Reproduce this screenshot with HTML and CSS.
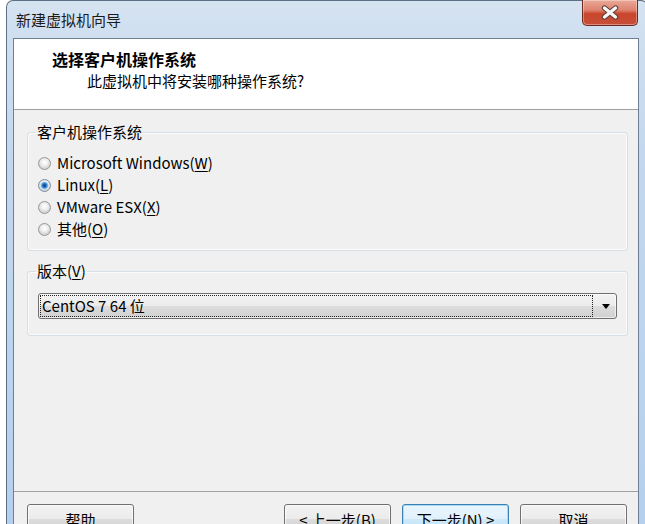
FILE: index.html
```html
<!DOCTYPE html>
<html lang="zh-CN">
<head>
<meta charset="utf-8">
<title>新建虚拟机向导</title>
<link rel="stylesheet" href="styles.css">
</head>
<body>
<div class="window">
  <div class="titlebar">
    <span class="title">新建虚拟机向导</span>
    <div class="close">
      <svg width="20" height="15" viewBox="0 0 20 15">
        <path d="M4.5 3 L15.5 12 M15.5 3 L4.5 12" stroke="#5a3b34" stroke-width="5.4" stroke-linecap="round" fill="none"/>
        <path d="M4.5 3 L15.5 12 M15.5 3 L4.5 12" stroke="#f7f7f7" stroke-width="3.4" stroke-linecap="round" fill="none"/>
      </svg>
    </div>
  </div>
  <div class="client">
    <div class="header">
      <div class="h-title">选择客户机操作系统</div>
      <div class="h-sub">此虚拟机中将安装哪种操作系统?</div>
    </div>
    <div class="body">
      <fieldset class="group">
        <legend class="legend">客户机操作系统</legend>
        <div class="radios">
          <div class="radio-row"><span class="radio"></span><span>Microsoft Windows(<u>W</u>)</span></div>
          <div class="radio-row"><span class="radio checked"></span><span>Linux(<u>L</u>)</span></div>
          <div class="radio-row"><span class="radio"></span><span>VMware ESX(<u>X</u>)</span></div>
          <div class="radio-row"><span class="radio"></span><span>其他(<u>O</u>)</span></div>
        </div>
      </fieldset>
      <fieldset class="group group2">
        <legend class="legend">版本(<u>V</u>)</legend>
        <div class="select">
          <div class="sel-value">CentOS 7 64 位</div>
          <div class="sel-arrow"><span class="tri"></span></div>
        </div>
      </fieldset>
    </div>
    <div class="footer">
      <button class="btn">帮助</button>
      <div class="btn-group">
        <button class="btn">&lt; 上一步(B)</button>
        <button class="btn default">下一步(N) &gt;</button>
        <button class="btn">取消</button>
      </div>
    </div>
  </div>
</div>
</body>
</html>
```
FILE: styles.css
```css
* { box-sizing: border-box; }
html, body { margin: 0; padding: 0; }
body {
  width: 645px;
  height: 524px;
  overflow: hidden;
  background: #ffffff;
  font-family: "Noto Sans CJK SC", "Noto Sans", sans-serif;
  font-size: 15px;
  color: #000;
}
u { text-decoration: underline; text-underline-offset: 2px; }

.window {
  margin-left: 6px;
  width: 642px;
  height: 560px;
  border: 1px solid #5d6f84;
  border-bottom: none;
  border-radius: 7px 7px 0 0;
  background: linear-gradient(180deg, #d6e3f1 0px, #cfdff0 36px, #c3d8ee 150px, #b3cfee 100%);
  display: flex;
  flex-direction: column;
}

.titlebar {
  height: 37px;
  display: flex;
  align-items: flex-start;
  flex-shrink: 0;
}
.title {
  margin-left: 9px;
  margin-top: 9px;
  line-height: 20px;
  color: #1b1b1b;
}
.close {
  margin-left: auto;
  margin-right: 9px;
  margin-top: -1px;
  width: 56px;
  height: 26px;
  border: 1px solid #6b2a1e;
  border-top: none;
  border-radius: 0 0 5px 5px;
  background: linear-gradient(180deg, #eaa898 0%, #de8470 40%, #c9452b 55%, #c7503a 100%);
  box-shadow: inset 0 0 0 1px rgba(255,255,255,0.35);
  display: flex;
  align-items: center;
  justify-content: center;
}

.client {
  margin: 0 8px 0 6px;
  flex: 1;
  border: 1px solid #6e7f93;
  border-bottom: none;
  background: #f0f0f0;
  display: flex;
  flex-direction: column;
}

.header {
  background: #ffffff;
  border-bottom: 1px solid #a0a0a0;
  padding: 9px 0 17px 38px;
}
.h-title {
  font-weight: bold;
  font-size: 16px;
  line-height: 22px;
}
.h-sub {
  line-height: 22px;
  padding-left: 35px;
}

.body {
  height: 381px;
  padding: 12px 10px 0 13px;
}

.group {
  margin: 0;
  padding: 0;
  border: 1px solid #d5dfe5;
  border-radius: 3px;
  box-shadow: inset 0 0 0 1px #fbfbfb;
}
.legend {
  padding: 0 1px;
  margin-left: 8px;
  line-height: 20px;
}
.radios {
  padding: 10px 0 10px 10px;
}
.radio-row {
  height: 22px;
  line-height: 22px;
  display: flex;
  align-items: center;
  gap: 6px;
}
.radio {
  width: 13px;
  height: 13px;
  border-radius: 50%;
  border: 1px solid #979797;
  background: radial-gradient(circle at 50% 40%, #ffffff 0, #f1f1f1 3px, #d3d3d3 6px);
  flex-shrink: 0;
}
.radio.checked {
  border-color: #7c8ea0;
  background:
    radial-gradient(circle at 50% 50%, #123f78 0, #1e62b0 1.5px, #4f9de2 2.8px, #a9d2f3 3.6px, rgba(255,255,255,0) 4.2px),
    radial-gradient(circle at 50% 40%, #ffffff 0, #f1f1f1 3px, #d3d3d3 6px);
}

.group2 {
  margin-top: 10px;
}
.select {
  margin: 12px 10px 16px 10px;
  height: 26px;
  border: 1px solid #707070;
  border-radius: 3px;
  background: linear-gradient(180deg, #f3f3f3 0%, #ebebeb 50%, #dddddd 50%, #d0d0d0 100%);
  box-shadow: inset 0 0 0 1px rgba(255,255,255,0.6);
  display: flex;
  align-items: center;
  padding: 1px 0 1px 1px;
}
.sel-value {
  flex: 1;
  height: 22px;
  line-height: 20px;
  border: 1px dotted #222;
  padding-left: 1px;
}
.sel-arrow {
  width: 23px;
  display: flex;
  justify-content: center;
  padding-left: 2px;
}
.tri {
  width: 0;
  height: 0;
  border-left: 4px solid transparent;
  border-right: 4px solid transparent;
  border-top: 5px solid #000;
}

.footer {
  border-top: 1px solid #a0a0a0;
  padding: 12px 11px 0 13px;
  display: flex;
  align-items: flex-start;
}
.btn-group {
  margin-left: auto;
  display: flex;
  gap: 11px;
}
.btn {
  width: 107px;
  height: 30px;
  padding: 1px 0 0 0;
  margin: 0;
  border: 1px solid #707070;
  border-radius: 3px;
  background: linear-gradient(180deg, #f2f2f2 0%, #ebebeb 50%, #dddddd 50%, #cfcfcf 100%);
  box-shadow: inset 0 0 0 1px rgba(255,255,255,0.7);
  font-family: "Noto Sans CJK SC", "Noto Sans", sans-serif;
  font-size: 15px;
  line-height: 26px;
  color: #000;
  text-align: center;
}
.btn.default {
  border-color: #3c7fb1;
  background: linear-gradient(180deg, #eaf6fd 0%, #e0f1fc 50%, #cfe9fa 50%, #bfe0f6 100%);
  box-shadow: inset 0 0 0 1px #a6dcf7;
}
```
